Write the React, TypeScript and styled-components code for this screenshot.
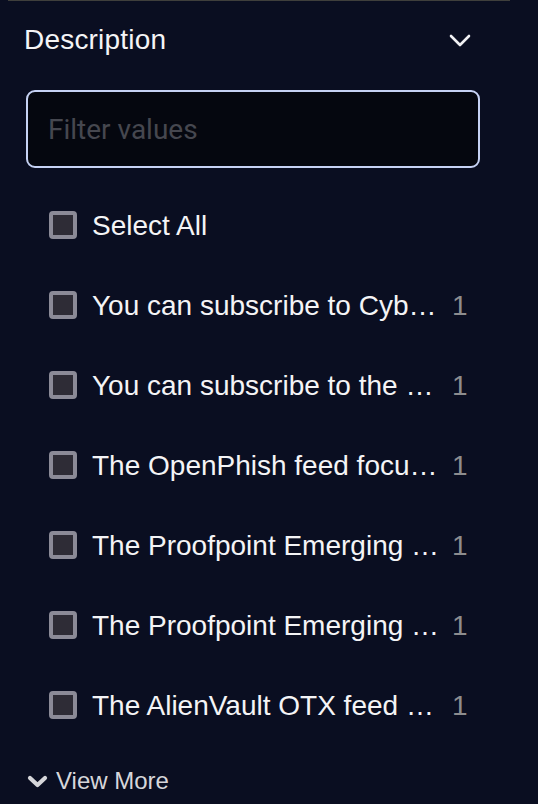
import React from 'react'
import styled, { createGlobalStyle } from 'styled-components'

const GlobalStyle = createGlobalStyle`
  html, body {
    margin: 0;
    padding: 0;
    background: #0a0e21;
  }
  body {
    font-family: "Liberation Sans", Arial, sans-serif;
  }
`

const Panel = styled.div`
  margin-left: 8px;
  width: 502px;
  border-top: 1px solid #3f3f3c;
  background: #0a0e21;
`

const Header = styled.div`
  height: 78px;
  display: flex;
  align-items: center;
  justify-content: space-between;
  padding: 0 39px 0 16px;
`

const Title = styled.span`
  font-size: 28px;
  color: #f4f4f6;
  letter-spacing: 0.2px;
`

const FilterInput = styled.input`
  display: block;
  box-sizing: border-box;
  margin: 11px 0 0 18px;
  width: 454px;
  height: 78px;
  padding: 0 20px;
  border: 2px solid #c6d2f4;
  border-radius: 9px;
  background: #05070f;
  color: #f4f4f6;
  font-family: Roboto, "Liberation Sans", sans-serif;
  font-size: 28px;
  outline: none;

  &::placeholder {
    color: #46474f;
  }
`

const List = styled.ul`
  list-style: none;
  margin: 18px 0 0;
  padding: 0 0 0 41px;
`

const Row = styled.li`
  height: 80px;
  display: flex;
  align-items: center;
`

const Box = styled.span`
  flex: none;
  box-sizing: border-box;
  width: 28px;
  height: 28px;
  margin-top: -3px;
  border: 4px solid #8b8a97;
  border-radius: 4px;
  background: #2e2c36;
`

const Label = styled.span<{ $fixed?: boolean }>`
  margin-left: 15px;
  font-size: 28px;
  color: #f4f4f6;
  white-space: nowrap;
  width: ${({ $fixed }) => ($fixed ? '355px' : 'auto')};
`

const Count = styled.span`
  margin-left: 5px;
  font-size: 28px;
  color: #8d8d8f;
`

const ViewMore = styled.button`
  display: flex;
  align-items: center;
  gap: 8px;
  margin: 21px 0 0 19px;
  padding: 0;
  height: 28px;
  border: none;
  background: none;
  color: #d6d6da;
  font-family: "Liberation Sans", Arial, sans-serif;
  font-size: 24px;
  cursor: pointer;
`

const values = [
  'You can subscribe to Cyb…',
  'You can subscribe to the …',
  'The OpenPhish feed focu…',
  'The Proofpoint Emerging …',
  'The Proofpoint Emerging …',
  'The AlienVault OTX feed …',
]

export default function App() {
  return (
    <>
      <GlobalStyle />
      <Panel>
        <Header>
          <Title>Description</Title>
          <svg width="22" height="13" viewBox="0 0 22 13">
            <polyline points="2,2 11,11 20,2" fill="none" stroke="#f0f0f3" strokeWidth="2.6" strokeLinecap="round" strokeLinejoin="round" />
          </svg>
        </Header>
        <FilterInput placeholder="Filter values" />
        <List>
          <Row>
            <Box />
            <Label>Select All</Label>
          </Row>
          {values.map((v, i) => (
            <Row key={i}>
              <Box />
              <Label $fixed>{v}</Label>
              <Count>1</Count>
            </Row>
          ))}
        </List>
        <ViewMore>
          <svg width="21" height="13" viewBox="0 0 21 13">
            <polyline points="3,3 10.5,10 18,3" fill="none" stroke="#d6d6da" strokeWidth="4.2" strokeLinecap="round" strokeLinejoin="round" />
          </svg>
          View More
        </ViewMore>
      </Panel>
    </>
  )
}
